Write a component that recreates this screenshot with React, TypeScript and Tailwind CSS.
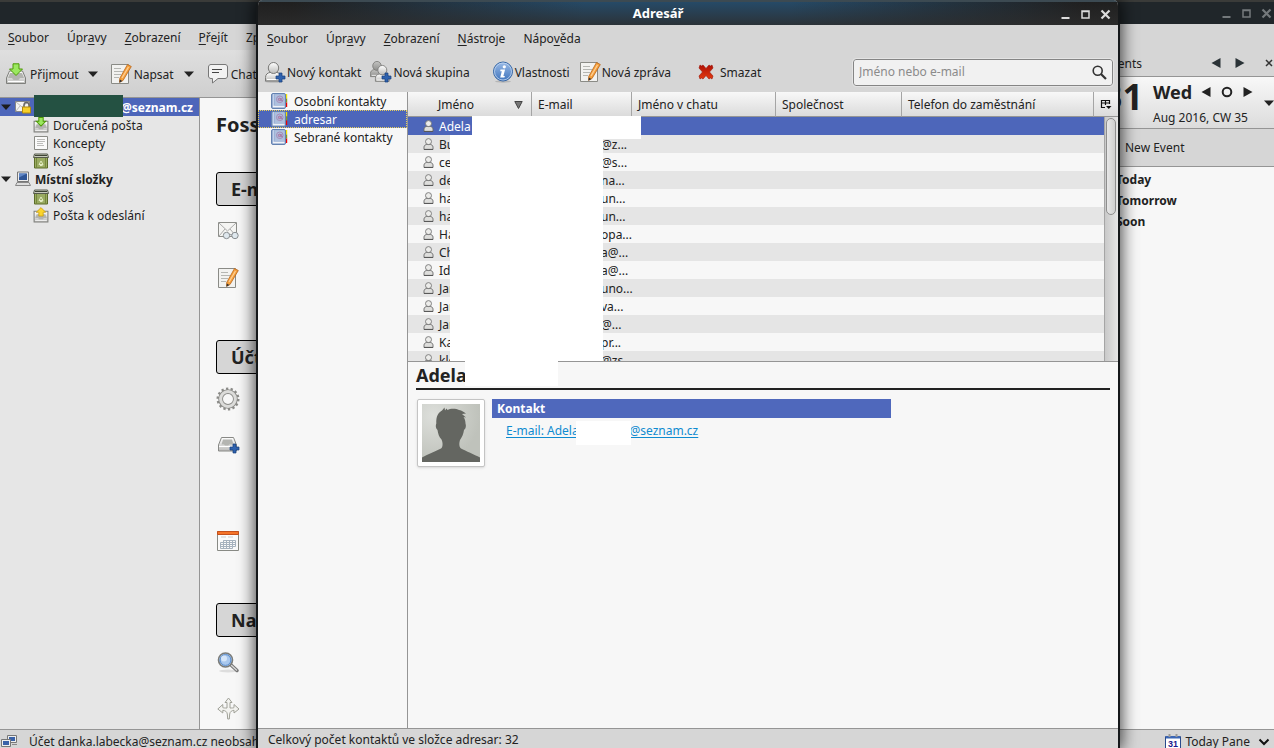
import React from "react";

type IconProps = { size?: number; up?: boolean };

const Person = ({ x = 0, y = 0, fill = "url(#silver)" }: { x?: number; y?: number; fill?: string }) => (
  <g transform={`translate(${x} ${y})`} stroke="#7a7a78" strokeWidth="1">
    <path d="M.5 19v-3.500c0-3 2-4.700 4.500-5h7c2.500.3 4.500 2 4.500 5v3.500z" fill={fill} />
    <ellipse cx="8.500" cy="6" rx="5.200" ry="5.500" fill={fill} />
    <path d="M2 17.500h13" stroke="#fff" />
  </g>
);

const Plus = ({ x, y }: { x: number; y: number }) => (
  <path transform={`translate(${x} ${y})`} d="M3 0h3v3h3v3H6v3H3V6H0V3h3z" fill="#2f62ae" stroke="#193f7c" strokeWidth=".7" />
);

function Defs() {
  return (
    <svg width="0" height="0" className="absolute" aria-hidden="true">
      <defs>
        <linearGradient id="silver" x1="0" y1="0" x2="0" y2="1">
          <stop offset="0" stopColor="#fff" />
          <stop offset="1" stopColor="#bdbdbb" />
        </linearGradient>
        <linearGradient id="grey" x1="0" y1="0" x2="0" y2="1">
          <stop offset="0" stopColor="#c4c4c2" />
          <stop offset="1" stopColor="#8e8e8c" />
        </linearGradient>
        <linearGradient id="blue" x1="0" y1="0" x2="0" y2="1">
          <stop offset="0" stopColor="#9bbbe6" />
          <stop offset="1" stopColor="#3f74bd" />
        </linearGradient>
        <linearGradient id="red" x1="0" y1="0" x2="0" y2="1">
          <stop offset="0" stopColor="#b01005" />
          <stop offset="1" stopColor="#e23a10" />
        </linearGradient>
        <radialGradient id="photo" cx=".2" cy=".2" r=".8">
          <stop offset="0" stopColor="#dddfdb" />
          <stop offset="1" stopColor="#bfc2bb" />
        </radialGradient>
      </defs>
    </svg>
  );
}

const NewContactIcon = () => (
  <svg width="22" height="22" viewBox="0 0 22 22" aria-hidden="true">
    <ellipse cx="10" cy="20.500" rx="9.500" ry="1.300" fill="#000" opacity=".15" />
    <Person x={1} y={1} />
    <Plus x={12} y={12} />
  </svg>
);

const NewListIcon = () => (
  <svg width="22" height="22" viewBox="0 0 22 22" aria-hidden="true">
    <g transform="scale(.82)">
      <Person x={0} y={0} fill="url(#grey)" />
    </g>
    <g transform="translate(5 4) scale(.86)">
      <Person />
    </g>
    <Plus x={12} y={12} />
  </svg>
);

const InfoIcon = () => (
  <svg width="22" height="22" viewBox="0 0 22 22" aria-hidden="true">
    <ellipse cx="11" cy="20.500" rx="8" ry="1.200" fill="#000" opacity=".15" />
    <circle cx="11" cy="10.500" r="9.500" fill="url(#blue)" stroke="#3465a4" />
    <circle cx="11" cy="10.500" r="8.500" fill="none" stroke="#c3d7f1" strokeWidth=".8" />
    <circle cx="12.300" cy="5.800" r="1.600" fill="#fff" />
    <path d="M8.500 8.600h4.600l-1.700 6.400h1.500l-.5 1.500H8.200L9.800 10.200H8.200z" fill="#fff" />
  </svg>
);

const WriteIcon = () => (
  <svg width="22" height="22" viewBox="0 0 22 22" aria-hidden="true">
    <path d="M1.500 1.500h17v19h-17z" fill="#f2f2f0" stroke="#8a8b86" />
    <path d="M4 5.500h7M4 8.500h9M4 11.500h7M4 14.500h5" stroke="#b5b6b2" />
    <path d="M17.500 1.500l3.800 2-8.300 14-3.500 1.800.3-4z" fill="#f7a13c" stroke="#b8641a" strokeWidth=".8" />
    <path d="M18.500 4l-6.500 11" stroke="#fcd09a" strokeWidth="1.200" />
    <path d="M9.900 16.600l2.400 1.300-2.800 1.900z" fill="#333" />
  </svg>
);

const DeleteIcon = () => (
  <svg width="24" height="22" viewBox="0 0 24 22" aria-hidden="true">
    <path d="M9 4l3 3.500L15 4l1.500 1 1.500-1 1 3-3.500 4 3.500 4-1 3-1.500-1-1.500 1-3-3.500L9 18l-1.500-1L6 18l-1-3 3.500-4L5 7l1-3 1.500 1z" fill="url(#red)" stroke="#9c1408" strokeWidth=".6" />
  </svg>
);

const GetMailIcon = ({ size = 22, up = false }: IconProps) => (
  <svg width={size} height={size} viewBox="0 0 22 22" aria-hidden="true">
    <path d={size < 20 ? "M1.500 6h19v14.500h-19z" : "M4.500 8h13l3 7v5.500h-19V15z"} fill="url(#silver)" stroke="#7e7f7b" strokeWidth={size < 20 ? 1.400 : 1} />
    <path d="M5 10h12l2 5h-4l-1.500 2h-5L7 15H3z" fill="#b3b4b0" />
    <path d="M3 18.500h16" stroke="#fff" />
    {up ? (
      <path d="M11 .8l6.500 6.500H14v5.200H8V7.300H4.500z" fill="#fbd52c" stroke="#c4980a" />
    ) : (
      <path d="M8 .8h6v5.200h3.500L11 12.500 4.500 6H8z" fill="#9be860" stroke="#4e9a06" strokeWidth={size < 20 ? 1.400 : 1} />
    )}
  </svg>
);

const ChatIcon = () => (
  <svg width="22" height="22" viewBox="0 0 22 22" aria-hidden="true">
    <path d="M4 1.500h14c1.500 0 2.500 1 2.500 2.500v9c0 1.500-1 2.500-2.500 2.500h-7L5.500 20v-4.500H4c-1.500 0-2.500-1-2.500-2.500V4c0-1.500 1-2.500 2.500-2.500z" fill="#f2f2f2" stroke="#777" />
    <path d="M5 6.500h10M5 9.500h7" stroke="#444" />
  </svg>
);

const BookIcon = () => (
  <svg width="18" height="16" viewBox="0 0 18 16" aria-hidden="true">
    <path d="M14 1h2.200v4.500H14z" fill="#f6e400" />
    <path d="M14 5.500h2.200v4H14z" fill="#8a9620" />
    <path d="M14 9.500h2.200v4.500H14z" fill="#e00" />
    <rect x=".5" y=".5" width="14" height="15" rx="1.500" fill="#9db2d6" stroke="#6482b0" />
    <path d="M2.500 1v12" stroke="#c3d2ea" />
    <rect x="4" y="1.500" width="9.500" height="10.500" fill="#adc0de" />
    <path d="M2 13.500h11.500" stroke="#f0f2f6" strokeWidth="1.300" />
    <circle cx="8.800" cy="6.300" r="3.300" fill="none" stroke="#a78bb8" />
    <circle cx="8.600" cy="6.400" r="1.300" fill="#c29dbb" stroke="#a06a9c" strokeWidth=".8" />
    <path d="M10.200 5v2.500l1.600.3" fill="none" stroke="#a06a9c" strokeWidth=".8" />
  </svg>
);

const ContactIcon = () => (
  <svg width="11" height="12" viewBox="0 0 11 12" aria-hidden="true">
    <path d="M1 11.500V9.200C1 7.500 2.300 6.700 3.500 6.500h4c1.200.2 2.500 1 2.500 2.700v2.300z" fill="#dededc" stroke="#666" strokeWidth=".9" />
    <path d="M1 11.400h9" stroke="#555" />
    <circle cx="5.500" cy="3.600" r="3" fill="#ececea" stroke="#777" strokeWidth=".9" />
  </svg>
);

const TrashIcon = () => (
  <svg width="16" height="16" viewBox="0 0 16 16" aria-hidden="true">
    <path d="M1.500 4.500h13v10.500h-13z" fill="#9aab62" stroke="#5c6d28" />
    <path d="M3.500 5v10M12.500 5v10" stroke="#76883c" />
    <path d="M1.500 1h13l1 3.500H.5z" fill="#c9ccbe" stroke="#565a4c" />
    <path d="M2 2.500h12" stroke="#3e4434" />
    <path d="M6 11.500l2-3.500 2 3.500zM7 12.500h2.500" fill="none" stroke="#e2ebc0" />
  </svg>
);

const DraftIcon = () => (
  <svg width="16" height="16" viewBox="0 0 16 16" aria-hidden="true">
    <path d="M1.500 1.500h13v13h-13z" fill="#fafafa" stroke="#8a8b86" />
    <path d="M4 4.500h8M4 6.500h8M4 8.500h6M4 10.500h7" stroke="#bcbcba" />
  </svg>
);

const AccountIcon = () => (
  <svg width="16" height="16" viewBox="0 0 16 16" aria-hidden="true">
    <path d="M.5 2.500h14v10H.5z" fill="#f4f4f2" stroke="#888" />
    <path d="M1 3l6 5 6-5M1 12l4-5" fill="none" stroke="#bbb" />
    <path d="M9 8V6c0-3.500 5-3.500 5 0v2" fill="none" stroke="#666" strokeWidth="1.500" />
    <path d="M7.500 8h8v6h-8z" fill="#f5cf2a" stroke="#b58c06" />
  </svg>
);

const ComputerIcon = () => (
  <svg width="16" height="16" viewBox="0 0 16 16" aria-hidden="true">
    <path d="M2.500 1h11v9.500h-11z" fill="#eee" stroke="#777" />
    <path d="M4 2.500h8v6.500H4z" fill="#2f5596" />
    <path d="M4 2.500h8L4 6.500z" fill="#5f86c6" />
    <path d="M2 11.500h12l1.500 3H.5z" fill="#ddd" stroke="#888" />
  </svg>
);

const ReadIcon = () => (
  <svg width="24" height="24" viewBox="0 0 24 24" aria-hidden="true">
    <path d="M2.500 3.500h18v14h-18z" fill="#f5f5f3" stroke="#8d8e8a" />
    <path d="M3 4l8.500 8L20 4M3 17l6-7M20 17l-6-7" fill="none" stroke="#aaa" />
    <g fill="#dfe8ee" stroke="#8a8f92">
      <circle cx="10.500" cy="16.500" r="3.200" />
      <circle cx="19" cy="16.500" r="3.200" />
      <path d="M13.500 16q1.300-1 2.500 0" fill="none" />
    </g>
  </svg>
);

const GearIcon = () => (
  <svg width="24" height="24" viewBox="0 0 24 24" aria-hidden="true">
    <circle cx="12" cy="12" r="10.300" fill="none" stroke="#8b8b88" strokeWidth="2.400" strokeDasharray="2.300 2.320" />
    <circle cx="12" cy="12" r="7.400" fill="none" stroke="#8b8b88" strokeWidth="4.800" />
    <circle cx="12" cy="12" r="7.400" fill="none" stroke="#dcdcda" strokeWidth="3" />
  </svg>
);

const NewAccountIcon = () => (
  <svg width="24" height="24" viewBox="0 0 24 24" aria-hidden="true">
    <path d="M5.500 3.500h12l3 7.500v6h-18v-6z" fill="url(#silver)" stroke="#888986" />
    <path d="M7 5.500h9l1.500 5h-4l-1.500 1H9l-1-1H5.500z" fill="#b4b5b1" />
    <path d="M3 12.500h17" stroke="#fff" />
    <Plus x={14} y={10} />
  </svg>
);

const CalendarIcon = () => (
  <svg width="24" height="24" viewBox="0 0 24 24" aria-hidden="true">
    <path d="M1.500 2.500h21v19h-21z" fill="#fafafa" stroke="#888a85" />
    <path d="M1.500 2.500h21v3h-21z" fill="#f57328" stroke="#c5501b" />
    <path d="M5 8h13" stroke="#ccc" strokeDasharray="5 2" />
    <path d="M7.500 11.500h12v6h-3v2h-12v-6h3zM7.500 13.500h12M4.500 15.500h15M4.500 17.500h12M7.500 11.500v8M10.500 11.500v8M13.500 11.500v8M16.500 11.500v6" fill="none" stroke="#a6b2be" />
  </svg>
);

const SearchIcon = () => (
  <svg width="24" height="24" viewBox="0 0 24 24" aria-hidden="true">
    <ellipse cx="12" cy="21" rx="9" ry="1.500" fill="#000" opacity=".1" />
    <path d="M14.500 14.500l6.500 6" stroke="#777" strokeWidth="3.500" strokeLinecap="round" />
    <path d="M15 15l6 5.500" stroke="#ddd" strokeWidth="1.200" />
    <circle cx="9.500" cy="10" r="7" fill="#a9c8ee" stroke="#7b7c79" strokeWidth="1.600" />
    <circle cx="9.500" cy="10" r="5.400" fill="none" stroke="#5b8ccc" />
    <circle cx="8" cy="8.500" r="3" fill="#d5e5f8" />
  </svg>
);

const FilterIcon = () => (
  <svg width="24" height="24" viewBox="0 0 24 24" aria-hidden="true">
    <path
      d="M12.500 1l3.500 4.500h-2V11c2 0 3.500 0 4-.5v-3l5 4.500-5 4v-2.700c-2 .2-4 1.200-4.300 3.700l-.4 5h-1.600l-.4-5C11 14.500 9 13.500 6.800 13.300V16l-5-4 5-4.500v3c.7.500 2.200.5 4.200.5V5.500H9z"
      fill="#f3f3f0"
      stroke="#a0a198"
    />
  </svg>
);

const Silhouette = () => (
  <svg viewBox="0 0 58 58" className="size-full" role="img" aria-label="Foto kontaktu">
    <path d="M0 0h58v58H0z" fill="url(#photo)" />
    <path
      d="M0 58v-4.500c6-3.500 14-6.500 19-9 2-1.200 2-6 .5-9-2.500-2.500-3.500-6-4-9.500-2-1.500-2-5-1.200-6.500C14 12 16 9 20 6.500L22.500 3.500l.5 3 1.500-2L25.500 6c3-2 9-1.500 11.500 0 3 .5 5 2 7 3.500l-4 .5 4 3.500-2.500-.5c1.500 2 2 4.500 2 6.500.8 2 .5 5-1.500 6.500-.5 4-2 7-4 10-1 3-1 7 1 8.500 5 2.500 13 6 19 9V58z"
      fill="#646661"
    />
  </svg>
);

const Tri = ({ d, className }: { d: "down" | "left" | "right"; className?: string }) => (
  <svg width="10" height="10" viewBox="0 0 10 10" className={className} aria-hidden="true">
    <path d={d === "down" ? "M0 2.500h10L5 8z" : d === "left" ? "M9.500 0v10L.5 5z" : "M.5 0v10l9-5z"} fill="currentColor" />
  </svg>
);

const WindowButtons = () => (
  <div className="flex items-center gap-[9px]">
    <button aria-label="Minimalizovat">
      <svg width="11" height="11" viewBox="0 0 11 11"><path d="M1.500 9h8" stroke="currentColor" strokeWidth="2" /></svg>
    </button>
    <button aria-label="Maximalizovat">
      <svg width="11" height="11" viewBox="0 0 11 11"><path d="M2 2h7v7H2zM2 2.500h7" fill="none" stroke="currentColor" strokeWidth="1.500" /></svg>
    </button>
    <button aria-label="Zavřít">
      <svg width="11" height="11" viewBox="0 0 11 11"><path d="M1.500 1.500l8 8M9.500 1.500l-8 8" stroke="currentColor" strokeWidth="2.200" /></svg>
    </button>
  </div>
);

function MenuItem({ label, at }: { label: string; at: number }) {
  return (
    <button className="whitespace-nowrap">
      {label.slice(0, at)}
      <span className="underline underline-offset-2">{label[at]}</span>
      {label.slice(at + 1)}
    </button>
  );
}

function ToolButton({ icon, children }: { icon: React.ReactNode; children: React.ReactNode }) {
  return (
    <button className="flex items-center gap-px whitespace-nowrap">
      {icon}
      <span className="pt-[2px]">{children}</span>
    </button>
  );
}

function Folder({ icon, children }: { icon: React.ReactNode; children: React.ReactNode }) {
  return (
    <li className="flex h-[18px] items-center gap-1 pl-[33px]">
      {icon}
      <span className="pt-[2px]">{children}</span>
    </li>
  );
}

function Section({ title, children }: { title: string; children: React.ReactNode }) {
  return (
    <section className="mb-[39px]">
      <h2 className="mb-px flex h-[34px] items-center rounded-[3px] border border-black bg-[#d6d6d6] pl-[14px] text-lg font-bold">{title}</h2>
      {children}
    </section>
  );
}

function Action({ label, children }: { label: string; children: React.ReactNode }) {
  return (
    <button aria-label={label} className="flex h-[47px] items-center">
      {children}
    </button>
  );
}

function MailWindow() {
  return (
    <div className="flex h-full flex-col bg-[#d6d6d6]">
      <header className="flex h-6 shrink-0 items-center justify-end border-t-2 border-[#3a3b39] bg-[#20262a] pr-[2px] text-[#74797c]">
        <WindowButtons />
      </header>
      <nav className="flex h-[26px] shrink-0 items-center gap-[18px] px-2 pt-[2px]">
        <MenuItem label="Soubor" at={0} />
        <MenuItem label="Úpravy" at={3} />
        <MenuItem label="Zobrazení" at={0} />
        <MenuItem label="Přejít" at={0} />
        <MenuItem label="Zpráva" at={2} />
      </nav>
      <div className="flex min-h-0 flex-1">
        <div className="flex min-w-0 flex-1 flex-col">
          <div className="flex h-12 shrink-0 items-center border-b border-[#959595] bg-linear-to-b from-[#dfdfdf] to-[#cfcfcf] pl-[5px]">
            <button className="flex items-center gap-[3px]"><GetMailIcon /><span className="pt-[2px]">Přijmout</span></button>
            <button aria-label="Možnosti příjmu" className="mr-3 ml-[9px]"><Tri d="down" /></button>
            <button className="flex items-center gap-[2px]"><WriteIcon /><span className="pt-[2px]">Napsat</span></button>
            <button aria-label="Možnosti psaní" className="mr-[13px] ml-[10px]"><Tri d="down" /></button>
            <button className="flex items-center gap-[2px]"><ChatIcon /><span className="pt-[2px]">Chat</span></button>
          </div>
          <div className="flex min-h-0 flex-1">
            <aside className="w-[200px] shrink-0 border-r border-[#959595] bg-[#e6e6e6]">
              <ul>
                <li className="relative flex h-[18px] items-center gap-1 bg-[#4d66ba] pr-[6px] pl-[1px] font-bold text-white">
                  <Tri d="down" className="text-[#1c1c1c]" />
                  <AccountIcon />
                  <span className="ml-auto pt-[2px]">@seznam.cz</span>
                  <span className="absolute -top-[3px] left-[34px] h-[22px] w-[89px] bg-[#245142]" />
                </li>
                <Folder icon={<GetMailIcon size={16} />}>Doručená pošta</Folder>
                <Folder icon={<DraftIcon />}>Koncepty</Folder>
                <Folder icon={<TrashIcon />}>Koš</Folder>
                <li className="flex h-[18px] items-center gap-1 pl-[1px] font-bold">
                  <Tri d="down" />
                  <ComputerIcon />
                  <span className="pt-[2px]">Místní složky</span>
                </li>
                <Folder icon={<TrashIcon />}>Koš</Folder>
                <Folder icon={<GetMailIcon size={16} up />}>Pošta k odeslání</Folder>
              </ul>
            </aside>
            <main className="min-w-0 flex-1 overflow-hidden bg-[#f7f7f7] px-4 pt-3">
              <h1 className="mb-[32px] text-xl leading-[30px] font-bold">FossaMail</h1>
              <Section title="E-mail">
                <Action label="Číst zprávy"><ReadIcon /></Action>
                <Action label="Napsat zprávu"><span className="pl-px"><WriteIcon /></span></Action>
              </Section>
              <Section title="Účty">
                <Action label="Nastavení účtu"><GearIcon /></Action>
                <Action label="Vytvořit účet"><NewAccountIcon /></Action>
                <div className="h-[48px]" />
                <Action label="Vytvořit kalendář"><CalendarIcon /></Action>
              </Section>
              <Section title="Nastavení">
                <Action label="Hledat zprávy"><SearchIcon /></Action>
                <Action label="Filtry zpráv"><FilterIcon /></Action>
              </Section>
            </main>
          </div>
        </div>
        <aside className="flex w-[194px] shrink-0 flex-col border-l border-[#959595]">
          <div className="flex h-[27px] items-center border-b border-[#959595] pl-[24px]">
            <span className="pt-px">Events</span>
            <button aria-label="Předchozí" className="ml-auto"><Tri d="left" className="text-[#2b3337]" /></button>
            <button aria-label="Další" className="mr-5 ml-[14px]"><Tri d="right" className="text-[#2b3337]" /></button>
            <button aria-label="Zavřít panel" className="pr-px">
              <svg width="8" height="8" viewBox="0 0 8 8"><path d="M1 1l6 6M7 1L1 7" stroke="#333" strokeWidth="1.500" /></svg>
            </button>
          </div>
          <div className="flex h-[52px] items-center border-b border-[#959595] bg-linear-to-b from-[#f8f8f8] to-[#dcdcdc]">
            <span className="w-[72px] pr-[10px] pb-3 text-right text-4xl font-bold">31</span>
            <div className="flex-1">
              <div className="flex items-center pt-[2px]">
                <span className="text-lg leading-6 font-bold">Wed</span>
                <button aria-label="Předchozí den" className="ml-[9px]"><Tri d="left" /></button>
                <button aria-label="Dnes" className="mx-[10px]">
                  <svg width="12" height="12" viewBox="0 0 12 12"><circle cx="6" cy="6" r="4.300" fill="none" stroke="currentColor" strokeWidth="2" /></svg>
                </button>
                <button aria-label="Následující den"><Tri d="right" /></button>
              </div>
              <div className="mt-1 leading-5">Aug 2016, CW 35</div>
            </div>
            <button aria-label="Zobrazit měsíc" className="w-[10px]"><Tri d="down" /></button>
          </div>
          <button className="h-[38px] border-b border-[#959595] pl-[44px] text-left">New Event</button>
          <ul className="flex-1 bg-[#f7f7f7] pt-[2px] pl-[35px] leading-[21px] font-bold">
            <li>Today</li>
            <li>Tomorrow</li>
            <li>Soon</li>
          </ul>
        </aside>
      </div>
      <footer className="flex h-[19px] shrink-0 items-center border-t border-[#959595] pt-[5px]">
        <svg width="18" height="16" viewBox="0 0 18 16" aria-hidden="true">
          <path d="M7.500 1.500h9v7h-9z" fill="#eee" stroke="#777" />
          <path d="M9 3h6v4H9z" fill="#3a62a8" />
          <path d="M1.500 5.500h9v7h-9z" fill="#eee" stroke="#777" />
          <path d="M3 7h6v4H3z" fill="#3a62a8" />
          <path d="M1 14.500h10M12 10.500h5" stroke="#888" />
        </svg>
        <span className="ml-[11px] whitespace-nowrap">Účet danka.labecka@seznam.cz neobsahuje zprávy</span>
        <button className="ml-auto flex items-center gap-1 pr-1">
          <svg width="16" height="16" viewBox="0 0 16 16" aria-hidden="true">
            <path d="M.5 2.500h15v13H.5z" fill="#fff" stroke="#2a4a8c" />
            <path d="M1 2h14v2.500H1z" fill="#3b66b5" />
            <path d="M4.500 0v3M11.500 0v3" stroke="#999" strokeWidth="2" />
            <text x="8" y="13" fontSize="9" fontWeight="bold" fontFamily="Liberation Sans" textAnchor="middle" fill="#1a1a8c">31</text>
          </svg>
          <span>Today Pane</span>
          <svg width="12" height="8" viewBox="0 0 12 8" className="ml-1" aria-hidden="true"><path d="M1.500 1.500L6 6l4.500-4.500" fill="none" stroke="#111" strokeWidth="2" /></svg>
        </button>
      </footer>
    </div>
  );
}

const contacts: [string, string][] = [
  ["Adela", ""],
  ["Bu", "@z..."],
  ["ce", "@s..."],
  ["de", "na..."],
  ["ha", "un..."],
  ["ha", "un..."],
  ["Ha", "opa..."],
  ["Ch", "a@..."],
  ["Id", "a@..."],
  ["Jar", "uno..."],
  ["Jar", "va..."],
  ["Jar", "@..."],
  ["Ka", "pr..."],
  ["kle", "@zs..."],
];

const headCell = "border-r border-[#a5a5a5] pt-[2px] pl-[6px] text-left font-normal";

function ContactTable() {
  return (
    <div className="relative flex h-[270px] shrink-0 overflow-hidden border-b border-[#959595]">
      <table className="w-full table-fixed border-separate border-spacing-0 self-start">
        <colgroup>
          <col className="w-[124px]" />
          <col className="w-[100px]" />
          <col className="w-[144px]" />
          <col className="w-[126px]" />
          <col />
          <col className="w-[10px]" />
          <col className="w-[14px]" />
        </colgroup>
        <thead>
          <tr className="h-[25px] bg-linear-to-b from-[#f8f8f8] to-[#dadada] *:border-b *:border-b-[#959595]">
            <th className="border-r border-[#a5a5a5] pt-[2px] font-normal">
              <div className="flex items-center justify-between pr-2 pl-[30px]">
                Jméno
                <svg width="9" height="8" viewBox="0 0 9 8" aria-hidden="true"><path d="M.8.5h7.400L4.500 7.500z" fill="#777" stroke="#444" /></svg>
              </div>
            </th>
            <th className={headCell}>E-mail</th>
            <th className={headCell}>Jméno v chatu</th>
            <th className={headCell}>Společnost</th>
            <th className={headCell}>Telefon do zaměstnání</th>
            <th colSpan={2}>
              <button aria-label="Vybrat sloupce" className="mx-auto block pt-px">
                <svg width="12" height="11" viewBox="0 0 12 11"><path d="M5 8.500H1.500v-7h8V5M1 4h9M5.500 1v5" fill="none" stroke="#111" strokeWidth="1.200" /><path d="M6 7h5.500L8.750 10z" fill="#111" /></svg>
              </button>
            </th>
          </tr>
        </thead>
        <tbody>
          {contacts.map(([name, mail], i) => (
            <tr key={i} className={i === 0 ? "h-[18px] bg-[#4d66ba] text-white" : i % 2 ? "h-[18px] bg-[#e5e5e5]" : "h-[18px] bg-[#f7f7f7]"}>
              <td>
                <div className="flex h-[18px] items-center gap-[5px] pl-[15px]">
                  <ContactIcon />
                  <span className="pt-[2px]">{name}</span>
                </div>
              </td>
              <td>
                <div className="flex h-[18px] items-center pl-[69px]">
                  <span className="pt-[2px]">{mail}</span>
                </div>
              </td>
              <td colSpan={4} />
              <td />
            </tr>
          ))}
        </tbody>
      </table>
      <span className="absolute top-[43px] left-[42px] h-[226px] w-[153px] bg-white" />
      <span className="absolute top-6 left-[64px] h-[23px] w-[169px] bg-white" />
      <div className="absolute top-[25px] right-0 bottom-0 w-[14px] border-l border-[#a5a5a5] bg-linear-to-r from-[#c9c9c9] to-[#e6e6e6] px-px pt-px">
        <div className="h-[97px] w-[10px] rounded-[5px] border border-[#8e8e8e] bg-linear-to-r from-[#e8e8e8] to-[#cfcfcf]" />
      </div>
    </div>
  );
}

function AddressBook() {
  return (
    <div className="absolute inset-y-0 right-[154px] left-[256px] flex flex-col overflow-hidden rounded-t-md border-x-2 border-[#15181a] bg-[#d6d6d6] shadow-[0_0_16px_2px_rgba(0,0,0,0.7)]">
      <header className="flex h-[25px] shrink-0 items-center border-t-2 border-[#3c4a52] pt-px [background-image:linear-gradient(to_bottom,transparent,#2d2d2dcc),linear-gradient(to_right,#1f1f1f_4%,#264a67_38%,#264a67_62%,#1f1f1f_96%)]">
        <h2 className="flex-1 text-center text-[13px] font-bold text-white">Adresář</h2>
        <div className="flex w-[60px] justify-end pr-[7px] text-[#dcdcdc]">
          <WindowButtons />
        </div>
      </header>
      <nav className="flex h-[27px] shrink-0 items-center gap-[18px] px-[9px]">
        <MenuItem label="Soubor" at={0} />
        <MenuItem label="Úpravy" at={3} />
        <MenuItem label="Zobrazení" at={0} />
        <MenuItem label="Nástroje" at={0} />
        <MenuItem label="Nápověda" at={4} />
      </nav>
      <div className="flex h-10 shrink-0 items-center gap-[22px] pr-[5px] pl-[6px]">
        <div className="flex gap-[9px]">
          <ToolButton icon={<NewContactIcon />}>Nový kontakt</ToolButton>
          <ToolButton icon={<NewListIcon />}>Nová skupina</ToolButton>
        </div>
        <div className="flex gap-[9px]">
          <ToolButton icon={<InfoIcon />}>Vlastnosti</ToolButton>
          <ToolButton icon={<WriteIcon />}>Nová zpráva</ToolButton>
        </div>
        <button className="flex items-center gap-[2px] pl-px">
          <DeleteIcon />
          <span className="pt-[2px]">Smazat</span>
        </button>
        <label className="ml-auto flex h-[27px] w-[260px] items-center rounded-[3px] border border-[#858585] bg-[#f1f1f1] px-[5px] outline outline-[#e4e4e4]">
          <input aria-label="Hledat" placeholder="Jméno nebo e-mail" className="min-w-0 flex-1 bg-transparent outline-none placeholder:text-[#8b8b8b]" />
          <svg width="15" height="15" viewBox="0 0 15 15" aria-hidden="true"><circle cx="5.700" cy="5.700" r="4.500" fill="none" stroke="#333" strokeWidth="1.600" /><path d="M9 9l5 5" stroke="#333" strokeWidth="2.200" /></svg>
        </label>
      </div>
      <div className="flex min-h-0 flex-1">
        <ul className="w-[150px] shrink-0 border-r border-[#959595] bg-[#f7f7f7] *:flex *:h-[18px] *:items-center *:gap-[5px] *:pl-[13px]">
          <li><BookIcon /><span className="pt-[2px]">Osobní kontakty</span></li>
          <li className="bg-[#4d66ba] text-white outline-1 -outline-offset-1 outline-[#e8cf5a] outline-dotted"><BookIcon /><span className="pt-[2px]">adresar</span></li>
          <li><BookIcon /><span className="pt-[2px]">Sebrané kontakty</span></li>
        </ul>
        <div className="flex min-w-0 flex-1 flex-col bg-[#f7f7f7]">
          <ContactTable />
          <article className="relative px-2">
            <h3 className="border-b-2 border-[#222] text-lg leading-[26px] font-bold">Adela</h3>
            <span className="absolute -top-px left-[57px] h-[25px] w-[93px] bg-white" />
            <div className="flex gap-[7px] pt-[9px] pl-px">
              <div className="size-[68px] rounded-[2px] border border-[#c4c4c4] bg-white p-1 shadow-sm">
                <Silhouette />
              </div>
              <div className="w-[399px]">
                <h4 className="bg-[#4f68bc] pl-[5px] leading-[19px] font-bold text-white">Kontakt</h4>
                <div className="relative mt-1 pl-[14px] leading-[18px]">
                  <a href="mailto:" className="text-[#0f8bd0] underline underline-offset-2">E-mail: Adelaxxxxxxxx@seznam.cz</a>
                  <span className="absolute -top-px left-[84px] h-[24px] w-[55px] bg-white" />
                </div>
              </div>
            </div>
          </article>
        </div>
      </div>
      <footer className="h-5 shrink-0 border-t border-[#959595] pt-px pl-[10px] leading-[19px]">Celkový počet kontaktů ve složce adresar: 32</footer>
    </div>
  );
}

export default function App() {
  return (
    <div className="relative h-screen overflow-hidden bg-[#d6d6d6] font-['Noto_Sans',sans-serif] text-[12px] text-[#222] [&_svg]:shrink-0">
      <Defs />
      <MailWindow />
      <AddressBook />
    </div>
  );
}
